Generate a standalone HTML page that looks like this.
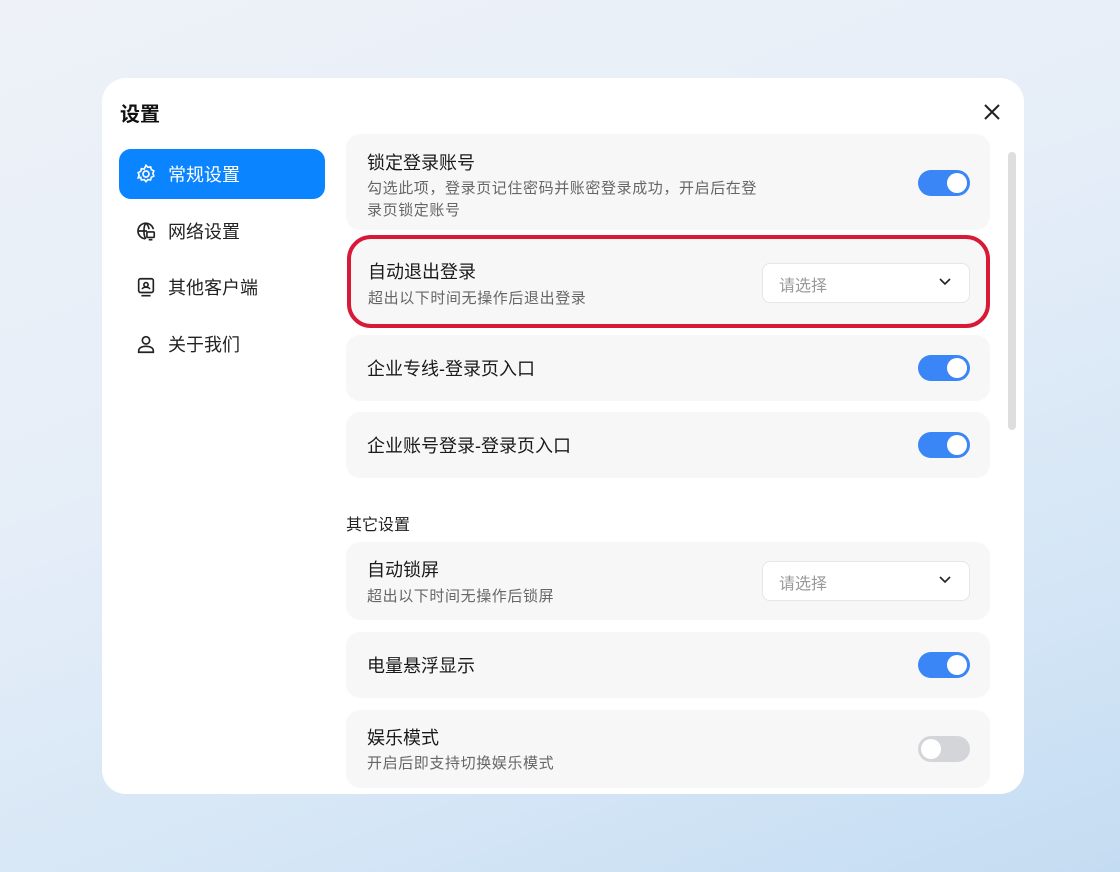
<!DOCTYPE html><html><head><meta charset="utf-8"><style>
*{margin:0;padding:0;box-sizing:border-box}
body{width:1120px;height:872px;overflow:hidden;font-family:"Liberation Sans","Noto Sans CJK SC",sans-serif;background:linear-gradient(160deg,#eef2f8 0%,#e6eef8 40%,#d5e6f6 75%,#c4dcf2 100%);position:relative}
.dlg{position:absolute;left:102px;top:78px;width:922px;height:716px;background:#fff;border-radius:24px;overflow:hidden}
.title{position:absolute;left:18px;top:20px;font-size:20px;font-weight:bold;color:#111}
.close{position:absolute;left:880px;top:24px}
.nav{position:absolute;left:17px;width:206px;height:50px;border-radius:12px;display:flex;align-items:center;padding-left:16px;font-size:18px;color:#222}
.nav svg{margin-right:11px}
.nav.on{background:#0a84ff;color:#fff}
.card{position:absolute;left:244px;width:644px;background:#f7f7f7;border-radius:14px}
.t{position:absolute;left:21px;font-size:18px;color:#1a1a1a}
.s{position:absolute;left:21px;font-size:15px;letter-spacing:0.6px;color:#666;line-height:22px}
.tg{position:absolute;left:572px;width:52px;height:26px;border-radius:13px;background:#3b86f6}
.tg::after{content:"";position:absolute;right:3px;top:3px;width:20px;height:20px;border-radius:50%;background:#fff}
.tg.off{background:#d4d5d8}.tg.off::after{right:auto;left:3px}
.sel{position:absolute;left:416px;width:208px;height:40px;background:#fff;border:1px solid #e6e6e6;border-radius:8px;font-size:16px;color:#999;padding:8px 0 0 16px}
.sel svg{position:absolute;right:18px;top:14px}
</style></head><body>
<div class="dlg">
<div class="title">设置</div>
<svg class="close" width="20" height="20" viewBox="0 0 20 20"><path d="M3 3L17 17M17 3L3 17" stroke="#222" stroke-width="2"/></svg>
<div class="nav on" style="top:71px"><svg width="22" height="22" viewBox="0 0 24 24" fill="none" stroke="#fff" stroke-width="1.8"><path d="M12 2.5l2 2.2 3-.4.8 2.9 2.7 1.4-1 2.8 1 2.8-2.7 1.4-.8 2.9-3-.4-2 2.2-2-2.2-3 .4-.8-2.9L3.5 16.1l1-2.8-1-2.8 2.7-1.4.8-2.9 3 .4z"/><circle cx="12" cy="12" r="3.3"/></svg>常规设置</div>
<div class="nav" style="top:128px"><svg width="22" height="22" viewBox="0 0 24 24" fill="none" stroke="#222" stroke-width="1.8"><path d="M20 10A8.5 8.5 0 1 0 11 20.5"/><path d="M3.5 12H13M12 3.5c-3 3-3 14 0 17M12 3.5c2 2 3 4 3.3 6.5"/><rect x="13" y="13" width="8" height="6" rx="1"/><path d="M15 21.5h4"/></svg>网络设置</div>
<div class="nav" style="top:184px"><svg width="22" height="22" viewBox="0 0 24 24" fill="none" stroke="#222" stroke-width="1.8"><rect x="4" y="3" width="16" height="15" rx="2"/><path d="M7 21.5h10M8 14.5c0-3 8-3 8 0"/><circle cx="12" cy="9.5" r="2.3"/></svg>其他客户端</div>
<div class="nav" style="top:241px"><svg width="22" height="22" viewBox="0 0 24 24" fill="none" stroke="#222" stroke-width="1.8"><circle cx="12" cy="8" r="4"/><path d="M4 21v-1.5c0-3 3-5 8-5s8 2 8 5V21z"/></svg>关于我们</div>

<div class="card" style="top:56px;height:96px"><div class="t" style="top:15px">锁定登录账号</div><div class="s" style="top:44px">勾选此项，登录页记住密码并账密登录成功，开启后在登<br>录页锁定账号</div><div class="tg" style="top:36px"></div></div>
<div class="card" style="top:157px;height:93px;left:245px;border:4px solid #d71a38;border-radius:24px;width:643px"><div class="t" style="top:19px;left:17px">自动退出登录</div><div class="s" style="top:49px;left:17px">超出以下时间无操作后退出登录</div><div class="sel" style="top:24px;left:411px">请选择<svg width="12" height="8" viewBox="0 0 12 8"><path d="M1 1l5 5 5-5" fill="none" stroke="#222" stroke-width="1.6"/></svg></div></div>
<div class="card" style="top:257px;height:66px"><div class="t" style="top:20px">企业专线-登录页入口</div><div class="tg" style="top:20px"></div></div>
<div class="card" style="top:334px;height:66px"><div class="t" style="top:20px">企业账号登录-登录页入口</div><div class="tg" style="top:20px"></div></div>
<div style="position:absolute;left:244px;top:433px;font-size:16px;color:#222">其它设置</div>
<div class="card" style="top:464px;height:78px"><div class="t" style="top:14px">自动锁屏</div><div class="s" style="top:44px">超出以下时间无操作后锁屏</div><div class="sel" style="top:19px">请选择<svg width="12" height="8" viewBox="0 0 12 8"><path d="M1 1l5 5 5-5" fill="none" stroke="#222" stroke-width="1.6"/></svg></div></div>
<div class="card" style="top:554px;height:66px"><div class="t" style="top:20px">电量悬浮显示</div><div class="tg" style="top:20px"></div></div>
<div class="card" style="top:632px;height:78px"><div class="t" style="top:14px">娱乐模式</div><div class="s" style="top:43px">开启后即支持切换娱乐模式</div><div class="tg off" style="top:26px"></div></div>
<div style="position:absolute;left:906px;top:74px;width:8px;height:278px;border-radius:4px;background:#dedede"></div>
</div>
</body></html>
